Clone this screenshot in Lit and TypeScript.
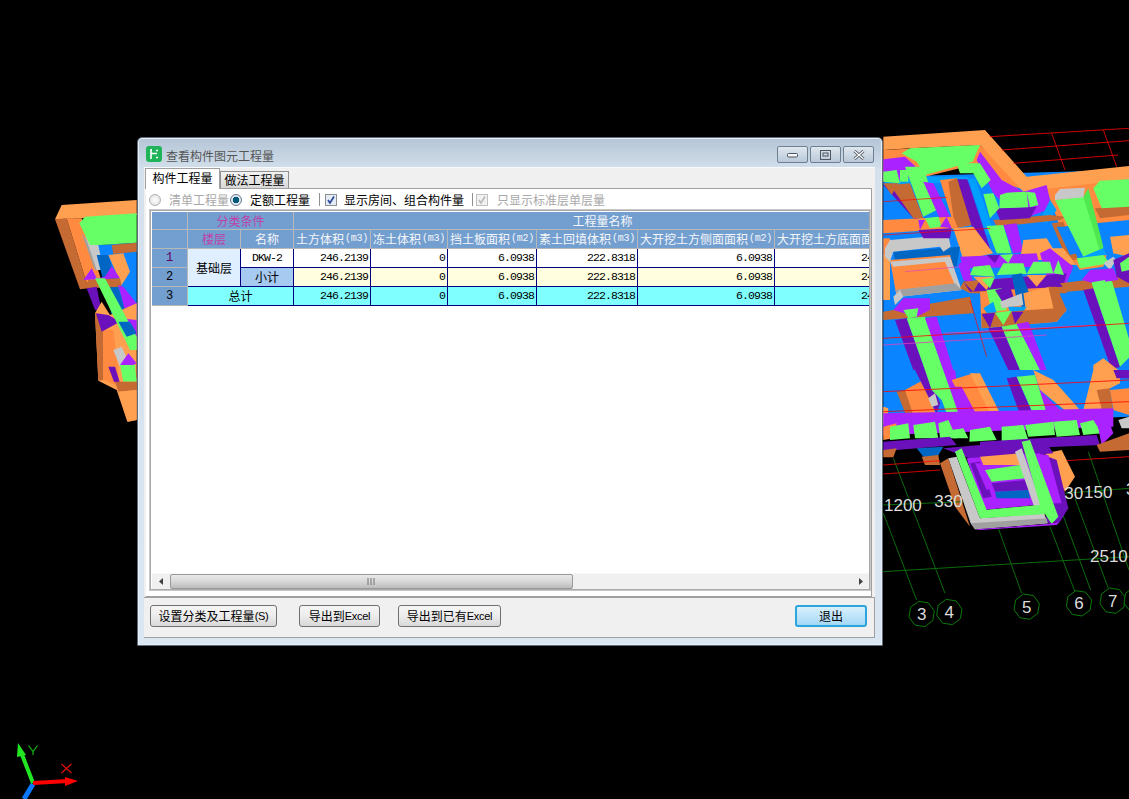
import { LitElement, html, css, svg } from "lit";
import { customElement } from "lit/decorators.js";

const o = "#ff9f50", O = "#c46a32", d = "#ff8a40", g = "#66ff66", G = "#4fe84f", p = "#aa22ff", P = "#6a11bb",
  b = "#0a85ff", B = "#0066c4", s = "#c8c8c8", S = "#a0a0a0", c = "#00a0ff";

// coordinates are 3x magnified, origin (880,120)
const rightTop: [string, string][] = [
  [b, "10,170 747,150 747,750 10,750"],
  [d, "10,90 300,75 440,205 747,178 747,300 540,320 500,210 440,210 360,190 300,130 135,170 10,185"],
  [o, "10,50 315,30 440,170 747,138 747,178 430,215 300,75 90,85 10,90"],
  [p, "10,118 75,110 140,170 10,185"],
  [c, "15,185 120,170 265,170 270,185 15,195"],
  [d, "180,180 230,175 300,310 225,325"],
  [O, "205,185 230,175 295,310 225,325"],
  [c, "265,178 285,175 345,345 320,345"],
  [P, "232,178 262,178 335,400 300,400"],
  [p, "290,120 300,95 365,180 430,215 500,195 515,265 420,300 340,220"],
  [g, "65,100 90,85 300,75 278,125 135,165 110,125"],
  [g, "230,130 300,130 332,180 305,205 280,160 240,160"],
  [P, "10,195 60,195 125,290 105,300"],
  [O, "30,195 90,190 130,295 100,295"],
  [g, "75,140 130,140 170,270 130,290"],
  [p, "130,185 160,190 215,300 190,320"],
  [g, "10,155 50,150 60,190 10,185"],
  [g, "60,150 85,150 85,185 60,185"],
  [O, "10,190 55,190 35,225"],
  [c, "510,240 530,270 500,310 480,300"],
  [O, "340,300 510,285 560,290 540,300 350,320"],
  [P, "345,265 470,260 450,295 360,300"],
  [g, "360,225 380,218 440,215 445,262 358,265"],
  [g, "310,222 340,220 358,265 330,295"],
  [g, "440,215 465,218 475,255 450,262"],
  [O, "515,310 550,305 595,420 570,440"],
  [b, "530,320 560,320 590,400 570,405"],
  [g, "525,240 610,230 670,385 610,410"],
  [G, "610,230 625,205 670,380 660,395"],
  [s, "525,225 540,207 615,203 610,232 525,240"],
  [c, "610,410 670,385 680,405 620,415"],
  [d, "580,420 680,405 670,440 600,450"],
  [g, "590,415 670,405 690,430 600,445"],
  [s, "670,430 700,410 708,420 690,450"],
  [O, "645,265 747,255 747,285 660,295"],
  [g, "640,205 660,182 747,178 747,260 665,265"],
  [b, "680,315 747,310 747,345 695,350"],
  [d, "10,300 220,290 240,340 10,340"],
  [b, "10,340 240,325 250,345 10,355"],
  [o, "220,325 280,320 340,400 250,420"],
  [g, "320,318 370,315 395,400 350,400"],
  [p, "370,315 410,310 430,395 400,400"],
  [d, "10,355 30,355 30,400 10,400"],
  [B, "40,395 240,380 230,440 50,450"],
  [o, "10,400 30,400 30,540 10,540"],
  [d, "30,420 210,405 240,505 50,530"],
  [s, "15,385 30,360 205,345 212,380 190,395 180,380 40,395 30,425 15,410"],
  [s, "30,425 210,410 245,510 60,530 45,510 225,495 195,425 40,440"],
  [S, "45,510 225,490 245,510 60,530"],
  [s, "40,530 60,510 70,530 45,555"],
  [P, "115,330 215,325 210,355 130,355"],
  [g, "135,295 175,290 185,320 150,325"],
  [p, "115,300 135,300 120,330"],
  [p, "180,320 200,290 215,325"],
  [o, "430,360 500,355 540,420 420,420"],
  [O, "240,505 250,485 560,460 560,520 270,520"],
  [d, "300,515 510,500 560,570 530,605 305,625"],
  [o, "510,385 550,385 590,435 510,430"],
  [p, "240,410 470,400 480,440 250,445"],
  [p, "480,400 510,385 580,440 560,490 500,470"],
  [P, "250,485 560,460 550,500 270,515"],
  [P, "320,405 360,405 345,430"],
  [g, "360,405 400,402 385,430"],
  [p, "235,435 260,410 280,490 250,480"],
  [g, "270,465 280,440 330,435 345,470"],
  [g, "350,465 370,430 430,430 440,462"],
  [g, "440,462 460,425 510,425 520,460"],
  [g, "520,460 535,420 552,465"],
  [O, "250,485 300,480 280,515"],
  [o, "280,470 340,470 320,510"],
  [o, "440,465 500,465 470,500"],
  [g, "305,478 345,472 330,505"],
  [B, "395,465 425,460 455,540 430,565 410,540"],
  [o, "430,520 510,500 555,570 530,605 440,590"],
  [O, "505,500 530,500 560,570 530,605"],
  [g, "320,510 365,505 380,570 335,575"],
  [P, "345,510 390,500 410,555 370,550"],
  [s, "360,545 425,520 430,555 365,565"],
  [c, "310,565 340,545 350,580 325,585"],
  [c, "385,560 440,560 420,590 390,580"],
  [O, "305,580 530,565 530,605 305,625"],
  [P, "305,582 345,578 330,625"],
  [g, "345,578 395,572 370,615"],
  [P, "395,575 430,575 405,612"],
  [O, "10,575 270,530 280,580 10,600"],
  [p, "40,570 70,535 150,535 150,570 110,590"],
  [g, "70,570 115,565 110,590 85,595"],
  [P, "45,600 80,595 135,750 100,750"],
  [g, "80,595 135,590 190,750 135,750"],
  [p, "135,595 170,590 220,750 190,750"],
  [P, "325,625 365,620 420,750 385,750"],
  [g, "365,620 410,612 480,750 420,750"],
  [p, "410,612 445,605 500,750 480,750"],
  [O, "540,490 747,465 747,500 560,515"],
  [P, "610,510 640,505 720,740 695,750"],
  [g, "635,490 695,480 760,700 720,740"],
  [o, "640,735 670,715 715,750 640,750"],
  [p, "605,480 630,450 700,445 715,480 640,490"],
  [g, "635,487 675,480 680,505 650,510"],
  [o, "690,350 747,345 747,410 700,400"],
  [P, "700,420 747,400 747,490 710,470"],
  [g, "720,430 747,410 747,450 725,455"],
];
const rightTopLines: [string, string, number][] = [
  ["#f00", "330,50 747,25", 2.4], ["#f00", "365,90 747,62", 2.4], ["#f00", "400,130 715,105", 2.4],
  ["#f00", "515,40 555,150", 2.4], ["#f00", "670,30 710,140", 2.4],
  ["#f00", "10,245 200,232", 2], ["#f00", "10,345 330,325", 2], ["#e040c0", "190,640 650,615", 2.4], ["#f00", "10,655 747,610", 2.4],
  ["#e040c0", "10,675 500,645", 2.4], ["#f00", "270,540 320,710", 2], ["#e040c0", "75,455 240,440", 2],
];
// origin (880,370)
const rightBottom: [string, string][] = [
  [b, "10,0 747,0 747,140 10,170"],
  [O, "50,65 80,60 105,150 90,165"],
  [d, "75,60 130,30 170,140 105,150"],
  [P, "105,0 140,0 180,100 170,130"],
  [g, "135,0 190,0 240,130 215,170 185,90 155,60"],
  [p, "190,0 225,0 245,130 235,130"],
  [d, "215,30 280,10 330,130 270,135"],
  [o, "270,10 300,10 360,130 330,130"],
  [p, "215,50 245,50 290,135 240,135"],
  [s, "145,85 165,70 175,105 155,110"],
  [o, "460,0 520,30 600,120 560,125 480,60"],
  [p, "465,20 480,60 560,140 500,150"],
  [P, "380,25 410,20 470,160 430,160"],
  [g, "410,20 465,15 500,130 470,155"],
  [o, "640,0 720,0 720,40 680,60 670,130 630,130 610,120"],
  [O, "650,60 690,55 700,130 670,135"],
  [P, "700,0 747,0 747,25 710,25"],
  [d, "690,60 747,55 747,135 700,120"],
  [s, "715,150 747,140 747,175 725,175"],
  [o, "10,110 25,115 20,165 10,165"],
  [p, "10,130 700,115 700,170 10,195"],
  [d, "10,170 50,160 40,205 10,210"],
  [g, "30,170 85,160 90,205 30,210"],
  [g, "100,165 165,155 175,205 105,205"],
  [g, "175,160 205,150 230,205 180,205"],
  [g, "215,180 250,175 265,205 220,205"],
  [g, "270,180 330,170 350,210 268,215"],
  [g, "365,170 430,165 445,210 365,215"],
  [g, "435,165 520,155 525,195 445,200"],
  [g, "520,155 590,150 600,195 530,200"],
  [g, "600,160 640,150 665,190 610,195"],
  [P, "10,215 210,200 230,225 50,240 10,240"],
  [P, "300,215 650,195 660,225 300,240"],
  [p, "650,150 680,135 700,190 665,225"],
  [O, "650,225 747,190 747,240 660,245"],
  [B, "110,235 190,230 170,265 130,260"],
  [O, "125,260 175,255 180,285 135,285"],
  [O, "10,240 50,235 40,262 10,262"],
  [O, "180,280 205,265 270,470 225,410"],
  [o, "495,250 545,240 585,320 555,365 520,300"],
  [O, "500,280 525,300 555,370 530,340"],
  [P, "490,255 530,270 565,415 540,455 500,460"],
  [p, "470,250 505,255 545,400 515,400"],
  [P, "190,235 300,225 500,220 520,250 280,270"],
  [p, "260,265 480,250 520,400 310,420"],
  [P, "270,280 300,275 335,380 310,385"],
  [p, "285,280 315,280 340,350 320,360"],
  [o, "300,260 420,250 420,285 310,285"],
  [g, "315,300 420,285 435,325 335,335"],
  [P, "335,340 440,330 450,360 345,365"],
  [B, "345,365 445,360 450,385 350,385"],
  [g, "320,420 480,405 495,432 300,445"],
  [s, "205,265 230,260 300,445 470,432 405,245 425,235 503,460 285,478 272,460"],
  [g, "225,245 245,235 320,420 480,405 425,215 450,210 535,440 515,462 495,432 300,445"],
  [S, "272,460 500,445 503,460 285,478"],
  [p, "285,478 500,462 540,455 530,465 300,480"],
];
const greens = ["10,430 110,690", "40,265 195,670", "10,605 747,560", "355,475 425,670",
  "510,470 585,665", "545,425 632,660", "585,385 685,655", "625,245 747,600"];
const octs: [number, number, string][] = [[125, 732, "3"], [208, 726, "4"], [440, 710, "5"], [597, 700, "6"], [698, 692, "7"], [770, 690, ""]];
const labels: [number, number, string][] = [[12, 422, "1200"], [163, 412, "330"], [553, 388, "30"], [612, 384, "150"], [630, 575, "2510"]];

// origin (40,190)
const left: [string, string][] = [
  [o, "65,45 290,30 290,75 120,85 45,88"],
  [O, "45,88 80,85 145,295 120,298"],
  [d, "80,85 125,85 190,290 145,295"],
  [b, "170,165 290,158 290,400 240,400 200,290"],
  [S, "125,130 150,165 185,240 165,240"],
  [s, "135,135 175,165 190,240 170,240"],
  [g, "118,100 135,80 290,70 290,158 180,165 150,165"],
  [O, "215,165 290,158 290,185 220,192"],
  [B, "170,195 205,195 250,340 260,375 215,375"],
  [o, "205,195 250,190 270,245 245,285 225,240"],
  [p, "130,270 155,235 170,265 195,260 215,228 240,265"],
  [O, "135,295 145,270 240,265 245,290"],
  [P, "140,295 170,290 185,365 165,360"],
  [p, "235,285 250,290 290,340 290,370 260,380"],
  [o, "165,370 185,335 210,375 290,340 290,690 262,695 230,600 175,572"],
  [O, "165,370 190,375 190,570 175,572"],
  [d, "190,420 220,420 240,590 190,570"],
  [P, "168,370 205,375 240,395 185,425"],
  [p, "240,385 290,390 290,440 250,430"],
  [g, "165,265 195,265 290,440 290,480 270,480"],
  [B, "235,395 270,395 290,430 260,440"],
  [s, "220,480 245,470 270,525 240,530"],
  [P, "205,530 225,530 240,580 222,575"],
  [p, "240,525 265,490 290,520 280,525"],
  [g, "240,525 285,525 290,575 250,575"],
  [O, "225,575 290,575 290,600 235,605"],
  [o, "235,605 290,600 290,690 265,695"],
];

@customElement("app-root")
export class AppRoot extends LitElement {
  static styles = css`
    :host { display: block; position: relative; width: 1129px; height: 799px; background: #000; overflow: hidden;
      font-family: "Liberation Sans", "Noto Sans CJK SC", sans-serif; font-size: 12px; }
    .scene { position: absolute; inset: 0; display: block; }
    .scene text { font-family: "Liberation Sans", sans-serif; fill: #dcdcdc; font-size: 17px; }
    .dialog { position: absolute; left: 137px; top: 137px; width: 746px; height: 509px; box-sizing: border-box;
      display: flex; flex-direction: column; padding: 0 7px 7px 6px; border: 1px solid #5f6b78; border-radius: 5px 5px 0 0;
      background: linear-gradient(#b4c5d6 0, #d4e0ec 32px, #dae6f2 100%); box-shadow: inset 0 0 0 1px #e6eef6; }
    .title { height: 29px; flex: none; display: flex; align-items: center; }
    .logo { width: 16px; height: 16px; margin: 3px 4px 0 2px; flex: none; }
    .title-text { color: #555; flex: 1; margin-top: 5px; font-family: "Noto Sans CJK SC", sans-serif; }
    .wbtns { display: flex; gap: 2px; margin: 4px 1px 0 0; }
    .wbtn { width: 31px; height: 17px; box-sizing: border-box; border: 1px solid #6f8091; border-radius: 2px;
      background: linear-gradient(#dfe7ef, #b9c8d8); display: flex; align-items: center; justify-content: center; }
    .wbtn svg { display: block; }
    .body { flex: 1; min-height: 0; background: #f0f0f0; display: flex; flex-direction: column; border-top: 1px solid #f8fbfd; }
    .tabs { display: flex; align-items: flex-end; height: 20px; padding-left: 1px; flex: none; font-family: "Noto Sans CJK SC", sans-serif; }
    .tab { box-sizing: border-box; display: flex; align-items: center; justify-content: center; color: #000; }
    .tab.on { width: 75px; height: 21px; padding-bottom: 3px; background: #fff; border: 1px solid #a0a0a0; border-bottom: none; position: relative; z-index: 1; margin-bottom: -1px; }
    .tab.off { width: 69px; height: 17px; padding-bottom: 1px; background: linear-gradient(#f3f3f3, #d8d8d8); border: 1px solid #909090; border-bottom: none; }
    .panel { flex: 1; min-height: 0; margin: 0 3px 0 1px; background: #fff; border: 1px solid #a0a0a0; border-left-color: #f0f0f0; box-sizing: border-box; display: flex; flex-direction: column; padding: 0 1px 3px 4px; }
    .opts { height: 21px; flex: none; display: flex; align-items: center; font-family: "Noto Sans CJK SC", sans-serif; color: #000; }
    .opts .dim { color: #a8a8a8; }
    .radio { width: 12px; height: 12px; box-sizing: border-box; border-radius: 50%; border: 1px solid #b0b0b0; background: radial-gradient(#fff, #ddd); flex: none; }
    .radio.on { border-color: #6a7a8a; background: radial-gradient(circle, #06587a 0, #06587a 3px, #e8eef3 3.6px, #c8d0d8 100%); }
    .check { width: 12px; height: 12px; box-sizing: border-box; border: 1px solid #8f8f8f; background: #e6ecf6; flex: none; display: flex; }
    .check.dim { background: #f2f2f2; border-color: #c0c0c0; }
    .sep { width: 1px; height: 13px; background: #909090; flex: none; }
    .o1 { margin-left: -1px; } .t1 { margin-left: 8px; } .o2 { margin-left: 1px; } .t2 { margin-left: 8px; }
    .s1 { margin-left: 9px; } .c1 { margin-left: 5px; } .t3 { margin-left: 7px; } .s2 { margin-left: 8px; } .c2 { margin-left: 3px; } .t4 { margin-left: 9px; }
    .frame { flex: 1; min-height: 0; box-sizing: border-box; border: 1px solid #a8a8a8; outline: 1px solid #c8c8c8; padding: 1px 0 0 1px; display: flex; flex-direction: column; margin-bottom: 3px; }
    .sheet { flex: 1; min-height: 0; overflow: hidden; width: 717px; background: #fff; }
    .grid { display: grid; width: 820px; font-family: "Noto Sans CJK SC", sans-serif;
      grid-template-columns: 36px 53px 53px 77px 77px 89px 101px 137px 137px;
      grid-template-rows: 18px 19px 19px 19px 19px; }
    .cell { box-sizing: border-box; border-right: 1px solid #000080; border-bottom: 1px solid #000080; display: flex; align-items: center; justify-content: center; white-space: nowrap; overflow: hidden; color: #000; line-height: 1; }
    .h { background: #739fd0; color: #f4f6f8; border-color: #b8b8b8; }
    .h small { font-family: "Liberation Mono", monospace; font-size: 10px; letter-spacing: -.2px; margin-left: 1px; }
    .m { color: #c040a8; }
    .c2s { grid-column: span 2; }
    .c6s { grid-column: span 6; }
    .r2s { grid-row: span 2; }
    .rn { background: #739fd0; border-color: #b8b8b8; font-family: "Liberation Mono", monospace; }
    .pu { color: #600060; }
    .floor { background: #e0efff; }
    .w { background: #fff; }
    .sub { background: #a6caf0; }
    .y { background: #ffffe0; }
    .t { background: #7fffff; }
    .mono { font-family: "Liberation Mono", monospace; font-size: 11.5px; letter-spacing: -.9px; }
    .n { justify-content: flex-end; padding-right: 2px; font-family: "Liberation Mono", monospace; font-size: 11.5px; letter-spacing: -.9px; }
    .last { justify-content: flex-start; padding-left: 86px; }
    .sb { height: 16px; flex: none; width: 717px; background: #f0f0f0; border-top: 1px solid #f8f8f8; box-sizing: border-box; display: flex; align-items: center; }
    .arr { width: 18px; flex: none; display: flex; align-items: center; justify-content: center; }
    .track { flex: 1; align-self: stretch; }
    .thumb { height: 15px; width: 403px; box-sizing: border-box; border: 1px solid #9a9a9a; border-radius: 2px; background: linear-gradient(#e8e8e8, #d8d8d8 50%, #bcbcbc); display: flex; align-items: center; justify-content: center; }
    .foot { height: 41px; flex: none; border-top: 1px solid #a0a0a0; border-bottom: 1px solid #a0a0a0; border-right: 1px solid #a0a0a0; box-sizing: border-box; display: flex; align-items: center; padding: 0 7px 4px 6px; background: #f0f0f0; }
    .btn { box-sizing: border-box; height: 22px; display: flex; align-items: center; justify-content: center; border: 1px solid #707070; border-radius: 3px; background: linear-gradient(#f6f6f6, #ececec 50%, #d8d8d8); color: #000; font-family: "Noto Sans CJK SC", sans-serif; white-space: nowrap; }
    .btn span { font-family: "Liberation Sans", sans-serif; font-size: 11px; letter-spacing: -.3px; }
    .b1 { width: 127px; } .b2 { width: 81px; margin-left: 22px; } .b3 { width: 103px; margin-left: 18px; }
    .b4 { width: 72px; margin-left: auto; border: 2px solid #2aa6dd; background: linear-gradient(#d8f0fd, #bfe4fa 50%, #a5d8f6); border-radius: 3px; }
  `;

  private poly(list: [string, string][]) {
    return list.map(([f, pts]) => svg`<polygon fill=${f} points=${pts}></polygon>`);
  }

  private scene() {
    return html`<svg class="scene" width="1129" height="799" viewBox="0 0 1129 799">
      <g transform="translate(40,190) scale(.33333)">${this.poly(left)}</g>
      <g transform="translate(880,120) scale(.33333)">
        ${this.poly(rightTop)}
        ${rightTopLines.map(([st, pts, w]) => svg`<polyline fill="none" stroke=${st} stroke-width=${w} points=${pts}></polyline>`)}
      </g>
      <g transform="translate(880,370) scale(.33333)">
        ${greens.map((pts) => svg`<polyline fill="none" stroke="#0b6b0b" stroke-width="3" points=${pts}></polyline>`)}
        ${this.poly(rightBottom)}
        <polyline fill="none" stroke="#f00" stroke-width="2.400" points="10,285 180,272"></polyline>
        <polyline fill="none" stroke="#f00" stroke-width="2.400" points="10,312 180,300"></polyline>
        <polyline fill="none" stroke="#f00" stroke-width="2.400" points="560,272 747,260"></polyline>
        <polyline fill="none" stroke="#f00" stroke-width="2.400" points="10,65 747,30"></polyline>
        <polyline fill="none" stroke="#f00" stroke-width="2.400" points="10,125 747,95"></polyline>
        <polyline fill="none" stroke="#0b6b0b" stroke-width="3" points="10,405 250,395"></polyline>
        <polyline fill="none" stroke="#0b6b0b" stroke-width="3" points="555,370 747,355"></polyline>
        ${octs.map(([x, y]) => {
          const pts = Array.from({ length: 8 }, (_, i) => {
            const a = Math.PI / 8 + (i * Math.PI) / 4 + 0.15;
            return `${(x + 39 * Math.cos(a)).toFixed(1)},${(y + 39 * Math.sin(a)).toFixed(1)}`;
          }).join(" ");
          return svg`<polygon fill="#000" stroke="#0b7a0b" stroke-width="3" points=${pts}></polygon>`;
        })}
      </g>
      ${octs.filter((q) => q[2]).map(([x, y, t]) => svg`<text x=${880 + x / 3} y=${370 + y / 3 + 6} text-anchor="middle">${t}</text>`)}
      ${labels.map(([x, y, t]) => svg`<text x=${880 + x / 3} y=${370 + y / 3}>${t}</text>`)}
      <text x="1126" y="495">3</text>
      <g fill="none">
        <line x1="33" y1="784" x2="24" y2="799" stroke="#0a78ff" stroke-width="5"></line>
        <line x1="33" y1="783" x2="21" y2="752" stroke="#22e622" stroke-width="4"></line>
        <line x1="33" y1="783" x2="68" y2="781" stroke="#f00" stroke-width="4"></line>
        <path d="M28.500 745.500 33 751.500 37.500 745.500M33 751.500V755" stroke="#12b812" stroke-width="1.200"></path>
        <path d="M61.500 764 71.500 773M71.500 764 61.500 773" stroke="#e01010" stroke-width="1.200"></path>
      </g>
      <polygon fill="#22e622" points="18,743 26,755 17,757"></polygon>
      <polygon fill="#f00" points="65,777 78,781 65,786"></polygon>
    </svg>`;
  }

  private row(n: string, cls: string) {
    const vals = ["246.2139", "0", "6.0938", "222.8318", "6.0938"];
    return html`${vals.map((v) => html`<div class="cell n ${cls}">${v}</div>`)}
      <div class="cell n last ${cls}">${n}</div>`;
  }

  render() {
    const heads: [string, string][] = [["土方体积", "(m3)"], ["冻土体积", "(m3)"], ["挡土板面积", "(m2)"], ["素土回填体积", "(m3)"], ["大开挖土方侧面面积", "(m2)"], ["大开挖土方底面面积", "(m2)"]];
    return html`${this.scene()}
      <div class="dialog">
        <div class="title">
          <svg class="logo" viewBox="0 0 16 16"><rect width="16" height="16" rx="3" fill="#1fb35a"></rect><path d="M5 3v10M5 7.500h6M10 4.500h2M10 11.500h2M5 4h1" stroke="#fff" stroke-width="1.600" fill="none"></path></svg>
          <div class="title-text">查看构件图元工程量</div>
          <div class="wbtns">
            <div class="wbtn"><svg width="11" height="6" viewBox="0 0 11 6"><rect x=".5" y="1.500" width="10" height="3.500" rx="1" fill="#f4f6f8" stroke="#4c5560"></rect></svg></div>
            <div class="wbtn"><svg width="11" height="10" viewBox="0 0 11 10"><rect x=".5" y=".5" width="10" height="9" fill="none" stroke="#4c5560"></rect><rect x="3" y="3" width="5" height="3" fill="none" stroke="#4c5560"></rect></svg></div>
            <div class="wbtn"><svg width="12" height="10" viewBox="0 0 12 10"><path d="M1.500 1 10.500 9M10.500 1 1.500 9" stroke="#4c5560" stroke-width="3"></path><path d="M1.500 1 10.500 9M10.500 1 1.500 9" stroke="#fff" stroke-width="1.200"></path></svg></div>
          </div>
        </div>
        <div class="body">
          <div class="tabs"><div class="tab on">构件工程量</div><div class="tab off">做法工程量</div></div>
          <div class="panel">
            <div class="opts">
              <span class="radio o1"></span><span class="t1 dim">清单工程量</span>
              <span class="radio on o2"></span><span class="t2">定额工程量</span>
              <span class="sep s1"></span>
              <span class="check c1"><svg width="10" height="10" viewBox="0 0 10 10"><path d="M2 5 4 8 8 1.500" fill="none" stroke="#2b4a9a" stroke-width="1.700"></path></svg></span>
              <span class="t3">显示房间、组合构件量</span>
              <span class="sep s2"></span>
              <span class="check dim c2"><svg width="10" height="10" viewBox="0 0 10 10"><path d="M2 5 4 8 8 1.500" fill="none" stroke="#bcbcbc" stroke-width="1.700"></path></svg></span>
              <span class="t4 dim">只显示标准层单层量</span>
            </div>
            <div class="frame">
              <div class="sheet">
                <div class="grid">
                  <div class="cell h"></div>
                  <div class="cell h m c2s">分类条件</div>
                  <div class="cell h c6s">工程量名称</div>
                  <div class="cell h"></div>
                  <div class="cell h m">楼层</div>
                  <div class="cell h">名称</div>
                  ${heads.map(([a, u]) => html`<div class="cell h">${a}<small>${u}</small></div>`)}

                  <div class="cell rn pu">1</div>
                  <div class="cell floor r2s">基础层</div>
                  <div class="cell w mono">DKW-2</div>
                  ${this.row("246.2139", "w")}
                  <div class="cell rn">2</div>
                  <div class="cell sub">小计</div>
                  ${this.row("246.2139", "y")}
                  <div class="cell rn">3</div>
                  <div class="cell t c2s">总计</div>
                  ${this.row("246.2139", "t")}
                </div>
              </div>
              <div class="sb">
                <div class="arr"><svg width="5" height="7" viewBox="0 0 5 7"><path d="M4 0V7L0 3.500Z" fill="#404040"></path></svg></div>
                <div class="thumb"><svg width="9" height="7" viewBox="0 0 9 7"><path d="M1 0V7M4 0V7M7 0V7" stroke="#707070"></path></svg></div>
                <div class="track"></div>
                <div class="arr"><svg width="5" height="7" viewBox="0 0 5 7"><path d="M1 0V7L5 3.500Z" fill="#404040"></path></svg></div>
              </div>
            </div>
          </div>
          <div class="foot">
            <div class="btn b1">设置分类及工程量<span>(S)</span></div>
            <div class="btn b2">导出到<span>Excel</span></div>
            <div class="btn b3">导出到已有<span>Excel</span></div>
            <div class="btn b4">退出</div>
          </div>
        </div>
      </div>`;
  }
}
